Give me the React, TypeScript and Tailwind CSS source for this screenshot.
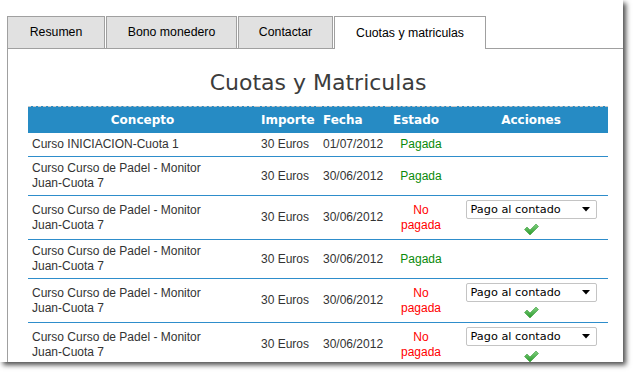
import React from "react";

const arial = { fontFamily: '"Liberation Sans", Arial, sans-serif' };
const verdana = { fontFamily: '"DejaVu Sans", Verdana, sans-serif' };

type Row = { paid: boolean; single?: boolean; date: string; concept: string };

const rows: Row[] = [
  { paid: true, single: true, date: "01/07/2012", concept: "Curso INICIACION-Cuota 1" },
  { paid: true, date: "30/06/2012", concept: "Curso Curso de Padel - Monitor Juan-Cuota 7" },
  { paid: false, date: "30/06/2012", concept: "Curso Curso de Padel - Monitor Juan-Cuota 7" },
  { paid: true, date: "30/06/2012", concept: "Curso Curso de Padel - Monitor Juan-Cuota 7" },
  { paid: false, date: "30/06/2012", concept: "Curso Curso de Padel - Monitor Juan-Cuota 7" },
  { paid: false, date: "30/06/2012", concept: "Curso Curso de Padel - Monitor Juan-Cuota 7" },
];

function Check() {
  return (
    <svg width="15" height="11" viewBox="0 0 15 11" className="mt-[5px] block">
      <defs>
        <linearGradient id="cg" x1="0" y1="0" x2="0" y2="1">
          <stop offset="0" stopColor="#7fd07f" />
          <stop offset="1" stopColor="#2a9a2a" />
        </linearGradient>
      </defs>
      <path d="M0.5 5.5 L3 3 L6 6 L12 0 L14.5 2.5 L6 11 Z" fill="url(#cg)" stroke="#3a9a3a" strokeWidth="0.6" />
    </svg>
  );
}

function Select() {
  return (
    <div
      className="w-[131px] h-[19px] border border-[#c4c4c4] rounded-[2px] bg-white flex items-center justify-between pl-[4px] pr-[6px] text-[11.3px] text-black"
      style={verdana}
    >
      <span className="leading-[17px]">Pago al contado</span>
      <svg width="8" height="5" viewBox="0 0 8 5">
        <path d="M0 0 L8 0 L4 4.5 Z" fill="#000" />
      </svg>
    </div>
  );
}

function Tab({ w, label, active }: { w: string; label: string; active?: boolean }) {
  return (
    <div
      className={
        active
          ? `${w} h-[33px] border-t border-l border-r border-[#a0a0a0] bg-white flex items-center justify-center text-[12.3px] text-black`
          : `${w} h-[33px] border border-[#a0a0a0] bg-[#e1e1e1] flex items-center justify-center text-[12.3px] text-black`
      }
      style={arial}
    >
      {label}
    </div>
  );
}

function Spacer() {
  return <div className="w-px h-[33px] border-b border-[#a0a0a0]" />;
}

export default function App() {
  return (
    <div className="w-[635px] h-[376px] bg-white">
      <div className="w-[623px] h-[362px] bg-white overflow-hidden shadow-[3px_3px_5px_rgba(0,0,0,0.7)]">
        <div className="pt-[16px] pl-[7px] flex items-end">
          <Tab w="w-[98px]" label="Resumen" />
          <Spacer />
          <Tab w="w-[131px]" label="Bono monedero" />
          <Spacer />
          <Tab w="w-[95px]" label="Contactar" />
          <Spacer />
          <Tab w="w-[152px]" label="Cuotas y matriculas" active />
          <div className="flex-1 h-[33px] border-b border-[#a0a0a0]" />
        </div>
        <div className="ml-[7px] border-l border-[#a0a0a0] h-[400px] pt-[21px] pl-[20px] pr-[15px]">
          <h1 className="text-center text-[22px] leading-[26px] text-[#3c3c3c] mb-[10px]" style={verdana}>
            Cuotas y Matriculas
          </h1>
          <table className="w-[580px] table-fixed border-separate border-spacing-0">
            <colgroup>
              <col className="w-[229px]" />
              <col className="w-[62px]" />
              <col className="w-[69px]" />
              <col className="w-[66px]" />
              <col className="w-[154px]" />
            </colgroup>
            <thead>
              <tr className="bg-[#268bc4] text-white text-[12px] font-bold" style={verdana}>
                <th className="border-t border-dashed border-[#c8c8c8] py-[4px] leading-[18px] text-center font-bold">Concepto</th>
                <th className="border-t border-dashed border-[#c8c8c8] py-[4px] pl-[4px] leading-[18px] text-left font-bold">Importe</th>
                <th className="border-t border-dashed border-[#c8c8c8] py-[4px] pl-[4px] leading-[18px] text-left font-bold">Fecha</th>
                <th className="border-t border-dashed border-[#c8c8c8] py-[4px] pr-[10px] leading-[18px] text-center font-bold">Estado</th>
                <th className="border-t border-dashed border-[#c8c8c8] py-[4px] leading-[18px] text-center font-bold">Acciones</th>
              </tr>
            </thead>
            <tbody className="text-[12px] leading-[15px] text-[#333]" style={arial}>
              {rows.map((r, i) => (
                <tr key={i}>
                  <td className="border-b border-[#2e8dcb] py-[4px] pl-[4px] pr-[40px] align-middle">{r.concept}</td>
                  <td className="border-b border-[#2e8dcb] py-[4px] pl-[4px] align-middle">30 Euros</td>
                  <td className="border-b border-[#2e8dcb] py-[4px] pl-[4px] align-middle">{r.date}</td>
                  <td className="border-b border-[#2e8dcb] py-[4px] px-[4px] align-middle text-center">
                    {r.paid ? (
                      <span className="text-[#0a8a0a]">Pagada</span>
                    ) : (
                      <span className="text-[#ff0000]">
                        No
                        <br />
                        pagada
                      </span>
                    )}
                  </td>
                  <td className="border-b border-[#2e8dcb] py-[4px] px-[5px] align-middle">
                    {!r.paid && (
                      <div className="flex flex-col items-center">
                        <Select />
                        <Check />
                      </div>
                    )}
                  </td>
                </tr>
              ))}
            </tbody>
          </table>
        </div>
      </div>
    </div>
  );
}
